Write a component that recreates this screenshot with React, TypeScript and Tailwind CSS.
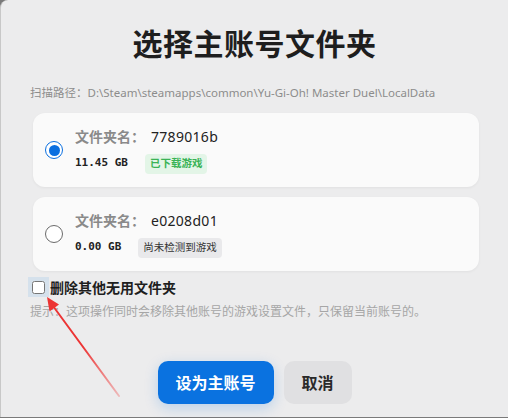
import React, { useState } from 'react';

const cjk = '"Noto Sans", "Noto Sans CJK SC", sans-serif';

function Radio({ on }: { on: boolean }) {
  return on ? (
    <div className="w-[18px] h-[18px] rounded-full border-[1.5px] border-[#0a6fe0] flex items-center justify-center bg-white shrink-0">
      <div className="w-[11px] h-[11px] rounded-full bg-[#0a6fe0]" />
    </div>
  ) : (
    <div className="w-[18px] h-[18px] rounded-full border border-[#6b6b6b] bg-white shrink-0" />
  );
}

function FolderCard({ name, size, badge, ok, selected, onPick }: {
  name: string; size: string; badge: string; ok: boolean; selected: boolean; onPick: () => void;
}) {
  return (
    <div
      onClick={onPick}
      className="h-[74px] w-[446px] rounded-[12px] bg-[#fafafa] shadow-[0_1px_3px_rgba(0,0,0,0.05)] flex items-center pl-[12px] gap-[12px] cursor-pointer"
    >
      <Radio on={selected} />
      <div className="flex flex-col gap-[7px]">
        <div className="flex items-center h-[20px] text-[14px]">
          <span className="font-bold text-[#8a8a8a] w-[76px]">文件夹名：</span>
          <span className="text-[#222] tracking-[0.3px]">{name}</span>
        </div>
        <div className="flex items-center h-[20px] gap-[17px]">
          <span className="text-[11px] font-semibold text-[#222]" style={{ fontFamily: '"DejaVu Sans Mono", monospace' }}>{size}</span>
          <span
            className={
              ok
                ? 'h-[20px] px-[5px] rounded-[4px] bg-[#e3f5e7] text-[#3ab356] text-[10.5px] font-bold flex items-center'
                : 'h-[20px] px-[5px] rounded-[4px] bg-[#e9e9eb] text-[#333] text-[10.5px] flex items-center'
            }
          >
            {badge}
          </span>
        </div>
      </div>
    </div>
  );
}

export default function App() {
  const [pick, setPick] = useState(0);
  const [del, setDel] = useState(false);

  return (
    <div className="w-[508px] h-[418px] bg-[#7a7a7a] overflow-hidden" style={{ fontFamily: cjk }}>
      <div className="relative w-[508px] h-[417px] rounded-tl-[8px] bg-[#ececed] border-l border-[#c8c8c8] flex flex-col items-center">
        <h1 className="pt-[24px] text-[30px] leading-[40px] font-bold text-[#1e1e1e] tracking-[0.5px]">选择主账号文件夹</h1>

        <div className="self-start ml-[29px] mt-[21px] text-[11.5px] leading-[16px] text-[#8c8c8c]">
          扫描路径：D:\Steam\steamapps\common\Yu-Gi-Oh! Master Duel\LocalData
        </div>

        <div className="self-start ml-[32px] mt-[12px] flex flex-col gap-[10px]">
          <FolderCard name="7789016b" size="11.45 GB" badge="已下载游戏" ok selected={pick === 0} onPick={() => setPick(0)} />
          <FolderCard name="e0208d01" size="0.00 GB" badge="尚未检测到游戏" ok={false} selected={pick === 1} onPick={() => setPick(1)} />
        </div>

        <label className="self-start ml-[27px] mt-[6px] flex items-center h-[20px] cursor-pointer">
          <span className="w-[21px] h-[20px] bg-[#d5e1ec] flex items-center justify-center">
            <input
              type="checkbox"
              checked={del}
              onChange={(e) => setDel(e.target.checked)}
              className="w-[13px] h-[13px] m-0 accent-[#0a6fe0]"
            />
          </span>
          <span className="text-[14px] font-bold text-[#1e1e1e] ml-[1px]">删除其他无用文件夹</span>
        </label>

        <div className="self-start ml-[29px] mt-[7px] text-[12px] leading-[16px] text-[#a6a6a6]">
          提示：这项操作同时会移除其他账号的游戏设置文件，只保留当前账号的。
        </div>

        <div className="mt-[41px] flex gap-[10px]">
          <button className="w-[116px] h-[43px] rounded-[10px] bg-[#0a72e0] text-white text-[16px] font-bold shadow-[0_4px_14px_rgba(10,114,224,0.22)]">
            设为主账号
          </button>
          <button className="w-[68px] h-[43px] rounded-[10px] bg-[#e0e0e2] text-[#2a2a2a] text-[16px] font-bold">
            取消
          </button>
        </div>

        {/* red annotation arrow */}
        <svg className="absolute left-0 top-0 pointer-events-none" width="508" height="418">
          <defs>
            <linearGradient id="fade" x1="118" y1="396" x2="46" y2="298" gradientUnits="userSpaceOnUse">
              <stop offset="0" stopColor="#f04040" stopOpacity="0.3" />
              <stop offset="0.5" stopColor="#ec3434" stopOpacity="1" />
            </linearGradient>
          </defs>
          <path d="M118 396 L52 306" stroke="url(#fade)" strokeWidth="2" strokeLinecap="round" />
          <path d="M46 297 L48.5 311.5 L58 304.5 Z" fill="#ec3434" />
        </svg>
      </div>
    </div>
  );
}
